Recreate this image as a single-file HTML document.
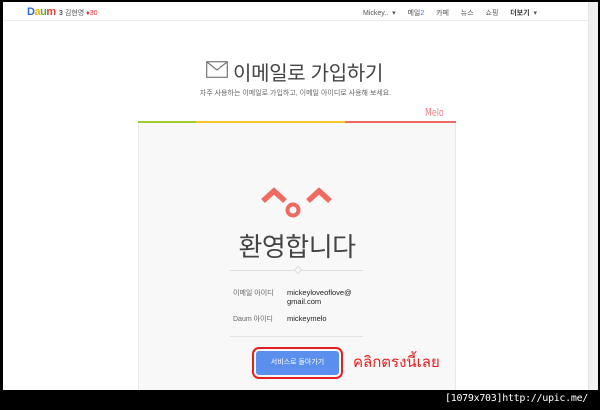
<!DOCTYPE html>
<html><head><meta charset="utf-8"><style>
*{margin:0;padding:0;box-sizing:border-box}
body{width:600px;height:410px;background:#000;position:relative;overflow:hidden;font-family:"Liberation Sans","Noto Sans CJK KR",sans-serif}
.page{position:absolute;left:3px;top:2px;width:595px;height:388px;background:#fff;overflow:hidden}
.hdr{position:absolute;left:0;top:0;width:585px;height:19px;border-bottom:1px solid #eee;font-size:7px;color:#555}
.sb{position:absolute;right:0;top:0;width:10px;height:388px;background:#f0f0f0;border-left:1px solid #e4e4e4}
.card{position:absolute;left:135px;top:119px;width:318px;height:300px;background:#f8f8f8;border:1px solid #e8e8e8;border-top:none}
.abs{position:absolute}
</style></head><body>
<div class="page">
<div class="hdr">
 <div class="abs" style="left:24px;top:4px;font-size:11px;font-weight:bold;letter-spacing:-0.5px"><span style="color:#2f6bd9">D</span><span style="color:#f2b500">a</span><span style="color:#58b33b">u</span><span style="color:#e8443a">m</span></div>
 <div class="abs" style="left:56px;top:6px"><b>3</b> 김현영 <span style="color:#e33">♦30</span></div>
 <div class="abs" style="left:360px;top:6px;word-spacing:2px">Mickey.. ▾ &nbsp; 메일<span style="color:#37f">2</span> &nbsp; 카페 &nbsp; 뉴스 &nbsp; 쇼핑 &nbsp; <b style="color:#333">더보기</b> ▾</div>
</div>
<div class="sb"></div>
<svg class="abs" style="left:203px;top:59px" width="22" height="17" viewBox="0 0 22 17"><rect x="0.7" y="0.7" width="20.6" height="15.6" fill="none" stroke="#777" stroke-width="1.2"/><path d="M1 1 L11 9 L21 1" fill="none" stroke="#777" stroke-width="1.2"/></svg>
<div class="abs" style="left:230px;top:55px;font-size:20px;color:#444;letter-spacing:-0.3px">이메일로 가입하기</div>
<div class="abs" style="left:0;width:585px;top:86px;text-align:center;font-size:7px;color:#666">자주 사용하는 이메일로 가입하고, 이메일 아이디로 사용해 보세요.</div>
<div class="abs" style="left:422px;top:104px;font-size:11px;color:#f08080;font-family:'DejaVu Sans Condensed',sans-serif;transform:scaleX(0.8);transform-origin:left">Melo</div>
<div class="card"></div>
<div class="abs" style="left:135px;top:119px;width:58px;height:2px;background:#9ccc30"></div>
<div class="abs" style="left:193px;top:119px;width:149px;height:2px;background:#f5c52a"></div>
<div class="abs" style="left:342px;top:119px;width:111px;height:2px;background:#ef6a64"></div>
<svg class="abs" style="left:255px;top:183px" width="80" height="35"><path d="M5 16 L16 6 L27 16" fill="none" stroke="#ef6a60" stroke-width="5.5"/><path d="M50 16 L61 6 L72 16" fill="none" stroke="#ef6a60" stroke-width="5.5"/><circle cx="35" cy="25" r="5.5" fill="none" stroke="#ef6a60" stroke-width="4"/></svg>
<div class="abs" style="left:135px;width:318px;top:225px;text-align:center;font-size:26px;color:#444;letter-spacing:-0.5px">환영합니다</div>
<div class="abs" style="left:227px;top:268px;width:133px;height:1px;background:#ddd"></div>
<div class="abs" style="left:292px;top:265px;width:6px;height:6px;background:#f8f8f8;border:1px solid #ddd;transform:rotate(45deg)"></div>
<div class="abs" style="left:230px;top:286px;font-size:7px;color:#666">이메일 아이디</div>
<div class="abs" style="left:284px;top:286px;font-size:7.5px;color:#222;line-height:9px">mickeyloveoflove@<br>gmail.com</div>
<div class="abs" style="left:230px;top:312px;font-size:7px;color:#666">Daum 아이디</div>
<div class="abs" style="left:284px;top:312px;font-size:7.5px;color:#222">mickeymelo</div>
<div class="abs" style="left:227px;top:334px;width:133px;height:1px;background:#e2e2e2"></div>
<div class="abs" style="left:249px;top:345px;width:91px;height:32px;border:2px solid #e52020;border-radius:7px"></div>
<div class="abs" style="left:253px;top:349px;width:83px;height:24px;background:#5b8fee;border-radius:3px;color:#fff;font-size:7px;text-align:center;line-height:24px">서비스로 돌아가기</div>
<div class="abs" style="left:350px;top:348px;font-size:15px;color:#e52020;font-family:'DejaVu Sans','Noto Sans CJK JP',sans-serif">คลิกตรงนี้เลย</div>
</div>
<div class="abs" style="left:445px;top:393px;font-size:10px;color:#fff;font-family:'DejaVu Sans Mono',monospace;letter-spacing:-0.3px">[1079x703]http://upic.me/</div>
</body></html>
